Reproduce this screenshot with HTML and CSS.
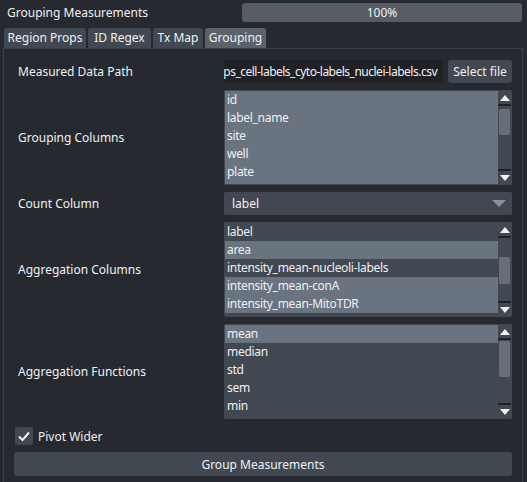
FILE: index.html
```html
<!DOCTYPE html>
<html lang="en">
<head>
    <meta charset="UTF-8">
    <title>Grouping Measurements</title>
    <link rel="stylesheet" href="styles.css">
</head>
<body>
    <div class="widget">
        <!-- Header with progress -->
        <div class="top-row">
            <span class="title">Grouping Measurements</span>
            <div class="progress">100%</div>
        </div>

        <!-- Tabs -->
        <div class="tabs">
            <div class="tab tab-region">Region Props</div>
            <div class="tab tab-regex">ID Regex</div>
            <div class="tab tab-tx">Tx Map</div>
            <div class="tab tab-grouping tab-active">Grouping</div>
        </div>

        <div class="pane">
            <div class="form">
                <div class="form-label">Measured Data Path</div>
                <div class="path-row">
                    <div class="line-edit"><span>measurements/regionprops_cell-labels_cyto-labels_nuclei-labels.csv</span></div>
                    <button class="btn btn-file">Select file</button>
                </div>

                <div class="form-label">Grouping Columns</div>
                <div class="list-box list-all">
                    <div class="list-items">
                        <div class="item">id</div>
                        <div class="item">label_name</div>
                        <div class="item">site</div>
                        <div class="item">well</div>
                        <div class="item">plate</div>
                        <div class="item">label</div>
                    </div>
                    <div class="scrollbar">
                        <div class="arrow up"></div>
                        <div class="sb-line"></div>
                        <div class="track"><div class="handle" style="margin-top: 3px; height: 26px;"></div></div>
                        <div class="sb-line"></div>
                        <div class="arrow down"></div>
                    </div>
                </div>

                <div class="form-label">Count Column</div>
                <div class="combo">
                    <span>label</span>
                    <div class="combo-arrow"></div>
                </div>

                <div class="form-label">Aggregation Columns</div>
                <div class="list-box">
                    <div class="list-items">
                        <div class="item">label</div>
                        <div class="item selected">area</div>
                        <div class="item">intensity_mean-nucleoli-labels</div>
                        <div class="item selected">intensity_mean-conA</div>
                        <div class="item selected">intensity_mean-MitoTDR</div>
                        <div class="item">intensity_mean-DAPI</div>
                    </div>
                    <div class="scrollbar">
                        <div class="arrow up"></div>
                        <div class="sb-line"></div>
                        <div class="track"><div class="handle" style="margin-top: 19px; height: 27px;"></div></div>
                        <div class="sb-line"></div>
                        <div class="arrow down"></div>
                    </div>
                </div>

                <div class="form-label">Aggregation Functions</div>
                <div class="list-box">
                    <div class="list-items">
                        <div class="item selected">mean</div>
                        <div class="item">median</div>
                        <div class="item">std</div>
                        <div class="item">sem</div>
                        <div class="item">min</div>
                        <div class="item">max</div>
                    </div>
                    <div class="scrollbar">
                        <div class="arrow up"></div>
                        <div class="sb-line"></div>
                        <div class="track"><div class="handle" style="margin-top: 1px; height: 36px;"></div></div>
                        <div class="sb-line"></div>
                        <div class="arrow down"></div>
                    </div>
                </div>
            </div>

            <label class="check-row">
                <span class="check-box">
                    <svg width="18" height="18" viewBox="0 0 18 18"><path d="M4 9.5 L7.5 13 L14 5.5" fill="none" stroke="#f0f1f2" stroke-width="2"/></svg>
                </span>
                Pivot Wider
            </label>

            <button class="btn btn-wide">Group Measurements</button>
        </div>
    </div>
</body>
</html>
```

FILE: styles.css
```css
/* Reset */
* {
    margin: 0;
    padding: 0;
    box-sizing: border-box;
}

body {
    font-family: "Noto Sans", "Open Sans", sans-serif;
    font-size: 12px;
    color: #f0f1f2;
    background-color: #262930;
    width: 527px;
    height: 482px;
    overflow: hidden;
}

/* Header row */
.top-row {
    display: flex;
    align-items: center;
    padding: 3px 5px 0 7px;
    height: 22px;
}

.title {
    flex: 1;
}

.progress {
    width: 280px;
    height: 19px;
    line-height: 19px;
    text-align: center;
    background-color: #555c65;
    border-radius: 3px;
}

/* Tabs */
.tabs {
    display: flex;
    gap: 2px;
    margin: 6px 0 0 4px;
}

.tab {
    height: 20px;
    line-height: 20px;
    text-align: center;
    white-space: nowrap;
    background-color: #414851;
    border-radius: 3px 3px 0 0;
}

.tab-region { width: 82px; }
.tab-regex { width: 63px; }
.tab-tx { width: 50px; }
.tab-grouping { width: 61px; }

.tab-active {
    background-color: #5a626c;
}

/* Pane */
.pane {
    margin-left: 3px;
    width: 520px;
    height: 440px;
    border: 1px solid #3a3f47;
    border-bottom: none;
    padding: 11px 10px 0 10px;
}

.form {
    display: grid;
    grid-template-columns: 210px minmax(0, 1fr);
    row-gap: 7px;
    align-items: center;
}

.form-label {
    padding-left: 4px;
}

.path-row {
    display: flex;
    gap: 5px;
    min-width: 0;
}

.line-edit {
    flex: 1;
    min-width: 0;
    height: 23px;
    display: flex;
    align-items: center;
    justify-content: flex-end;
    overflow: hidden;
    white-space: nowrap;
    letter-spacing: -0.5px;
    background-color: #1f2127;
    border-radius: 2px;
    padding: 0 6px 0 2px;
}

.btn {
    font-family: inherit;
    font-size: 12px;
    color: #f0f1f2;
    background-color: #414851;
    border: none;
    border-radius: 3px;
}

.btn-file {
    flex: none;
    width: 64px;
    height: 23px;
}

/* Lists */
.list-box {
    height: 95px;
    display: flex;
    background-color: #414851;
    border-radius: 2px;
    padding: 1px;
    overflow: hidden;
}

.list-all .list-items {
    background-color: #6a7380;
}

.list-items {
    flex: 1;
    min-width: 0;
    overflow: hidden;
}

.item {
    height: 18px;
    line-height: 18px;
    padding-left: 2px;
    white-space: nowrap;
    letter-spacing: -0.3px;
}

.item.selected {
    background-color: #6a7380;
}

.scrollbar {
    flex: none;
    width: 13px;
    display: flex;
    flex-direction: column;
    background-color: #414851;
}

.arrow {
    height: 13px;
    display: flex;
    justify-content: center;
    align-items: center;
}

.arrow::after {
    content: "";
    border-left: 5px solid transparent;
    border-right: 5px solid transparent;
}

.arrow.up::after {
    border-bottom: 6px solid #f0f1f2;
}

.arrow.down::after {
    border-top: 6px solid #f0f1f2;
}

.sb-line {
    height: 2px;
    background-color: #1f2127;
}

.track {
    flex: 1;
    padding: 0 1px;
}

.handle {
    background-color: #666e7a;
    border-radius: 2px;
}

/* Combo box */
.combo {
    height: 23px;
    display: flex;
    align-items: center;
    justify-content: space-between;
    padding: 0 6px 0 8px;
    background-color: #414851;
    border-radius: 2px;
}

.combo-arrow {
    border-left: 7px solid transparent;
    border-right: 7px solid transparent;
    border-top: 7px solid #8a9099;
}

/* Checkbox row */
.check-row {
    display: flex;
    align-items: center;
    gap: 5px;
    margin: 8px 0 0 1px;
    height: 18px;
}

.check-box {
    width: 18px;
    height: 18px;
    background-color: #414851;
    border-radius: 3px;
    display: flex;
}

.btn-wide {
    display: block;
    width: 100%;
    height: 24px;
    margin-top: 7px;
}
```
